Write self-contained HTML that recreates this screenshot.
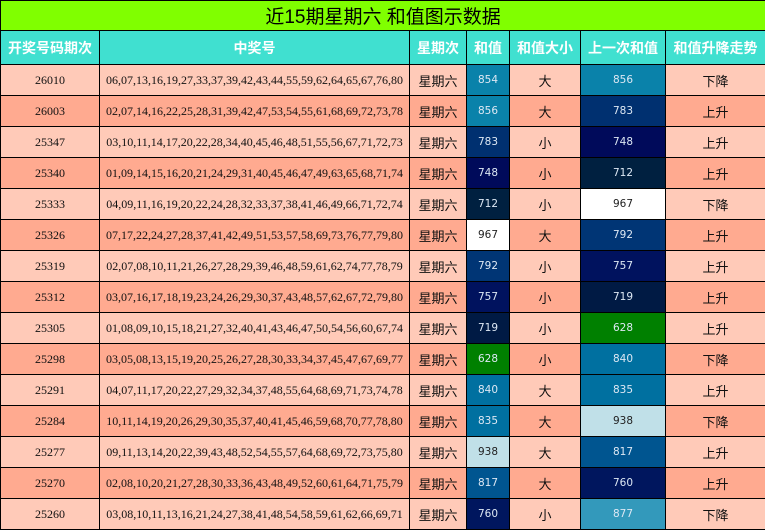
<!DOCTYPE html>
<html><head><meta charset="utf-8"><style>
*{margin:0;padding:0;box-sizing:border-box}
body{width:765px;height:530px;overflow:hidden;background:#fff;font-family:"Liberation Serif","Noto Serif CJK SC",serif}
table{border-collapse:collapse;table-layout:fixed;width:765px;position:absolute;left:0;top:0}
td{border:1px solid #000;text-align:center;font-size:12px;color:#111;height:31px;padding:0;white-space:nowrap;overflow:hidden}
.t td{height:30px;background:#80ff00;font-family:"Liberation Sans","Noto Sans CJK SC",sans-serif;font-size:19px;color:#000}
.h td{height:34px;background:#40e0d0;color:#fff;font-weight:bold;font-family:"Liberation Sans","Noto Sans CJK SC",sans-serif;font-size:14px}
.a td{background:#ffcab8}.b td{background:#ffaa90}
td.c{font-family:"Liberation Sans","Noto Sans CJK SC",sans-serif;font-size:13px}
td.n{font-family:"DejaVu Sans",sans-serif;font-size:10.5px;color:#dde8f4}
td.n.d{color:#222}
</style></head><body>
<table>
<colgroup><col style="width:99px"><col style="width:310px"><col style="width:57px"><col style="width:43px"><col style="width:71px"><col style="width:85px"><col style="width:100px"></colgroup>
<tr class="t"><td colspan="7">近15期星期六 和值图示数据</td></tr>
<tr class="h"><td>开奖号码期次</td><td>中奖号</td><td>星期次</td><td>和值</td><td>和值大小</td><td>上一次和值</td><td>和值升降走势</td></tr>
<tr class="a"><td>26010</td><td>06,07,13,16,19,27,33,37,39,42,43,44,55,59,62,64,65,67,76,80</td><td class="c">星期六</td><td class="n" style="background:#0a82aa">854</td><td class="c">大</td><td class="n" style="background:#0a82aa">856</td><td class="c">下降</td></tr>
<tr class="b"><td>26003</td><td>02,07,14,16,22,25,28,31,39,42,47,53,54,55,61,68,69,72,73,78</td><td class="c">星期六</td><td class="n" style="background:#0a82aa">856</td><td class="c">大</td><td class="n" style="background:#003070">783</td><td class="c">上升</td></tr>
<tr class="a"><td>25347</td><td>03,10,11,14,17,20,22,28,34,40,45,46,48,51,55,56,67,71,72,73</td><td class="c">星期六</td><td class="n" style="background:#003070">783</td><td class="c">小</td><td class="n" style="background:#000a5a">748</td><td class="c">上升</td></tr>
<tr class="b"><td>25340</td><td>01,09,14,15,16,20,21,24,29,31,40,45,46,47,49,63,65,68,71,74</td><td class="c">星期六</td><td class="n" style="background:#000a5a">748</td><td class="c">小</td><td class="n" style="background:#002040">712</td><td class="c">上升</td></tr>
<tr class="a"><td>25333</td><td>04,09,11,16,19,20,22,24,28,32,33,37,38,41,46,49,66,71,72,74</td><td class="c">星期六</td><td class="n" style="background:#002040">712</td><td class="c">小</td><td class="n d" style="background:#fff">967</td><td class="c">下降</td></tr>
<tr class="b"><td>25326</td><td>07,17,22,24,27,28,37,41,42,49,51,53,57,58,69,73,76,77,79,80</td><td class="c">星期六</td><td class="n d" style="background:#fff">967</td><td class="c">大</td><td class="n" style="background:#003575">792</td><td class="c">上升</td></tr>
<tr class="a"><td>25319</td><td>02,07,08,10,11,21,26,27,28,29,39,46,48,59,61,62,74,77,78,79</td><td class="c">星期六</td><td class="n" style="background:#003575">792</td><td class="c">小</td><td class="n" style="background:#00125e">757</td><td class="c">上升</td></tr>
<tr class="b"><td>25312</td><td>03,07,16,17,18,19,23,24,26,29,30,37,43,48,57,62,67,72,79,80</td><td class="c">星期六</td><td class="n" style="background:#00125e">757</td><td class="c">小</td><td class="n" style="background:#001a44">719</td><td class="c">上升</td></tr>
<tr class="a"><td>25305</td><td>01,08,09,10,15,18,21,27,32,40,41,43,46,47,50,54,56,60,67,74</td><td class="c">星期六</td><td class="n" style="background:#001a44">719</td><td class="c">小</td><td class="n" style="background:#008000">628</td><td class="c">上升</td></tr>
<tr class="b"><td>25298</td><td>03,05,08,13,15,19,20,25,26,27,28,30,33,34,37,45,47,67,69,77</td><td class="c">星期六</td><td class="n" style="background:#008000">628</td><td class="c">小</td><td class="n" style="background:#0070a0">840</td><td class="c">下降</td></tr>
<tr class="a"><td>25291</td><td>04,07,11,17,20,22,27,29,32,34,37,48,55,64,68,69,71,73,74,78</td><td class="c">星期六</td><td class="n" style="background:#0070a0">840</td><td class="c">大</td><td class="n" style="background:#0070a0">835</td><td class="c">上升</td></tr>
<tr class="b"><td>25284</td><td>10,11,14,19,20,26,29,30,35,37,40,41,45,46,59,68,70,77,78,80</td><td class="c">星期六</td><td class="n" style="background:#0070a0">835</td><td class="c">大</td><td class="n d" style="background:#c0e0e8">938</td><td class="c">下降</td></tr>
<tr class="a"><td>25277</td><td>09,11,13,14,20,22,39,43,48,52,54,55,57,64,68,69,72,73,75,80</td><td class="c">星期六</td><td class="n d" style="background:#c0e0e8">938</td><td class="c">大</td><td class="n" style="background:#005590">817</td><td class="c">上升</td></tr>
<tr class="b"><td>25270</td><td>02,08,10,20,21,27,28,30,33,36,43,48,49,52,60,61,64,71,75,79</td><td class="c">星期六</td><td class="n" style="background:#005590">817</td><td class="c">大</td><td class="n" style="background:#00165e">760</td><td class="c">上升</td></tr>
<tr class="a"><td>25260</td><td>03,08,10,11,13,16,21,24,27,38,41,48,54,58,59,61,62,66,69,71</td><td class="c">星期六</td><td class="n" style="background:#00165e">760</td><td class="c">小</td><td class="n" style="background:#3399bb">877</td><td class="c">下降</td></tr>
</table>
</body></html>
